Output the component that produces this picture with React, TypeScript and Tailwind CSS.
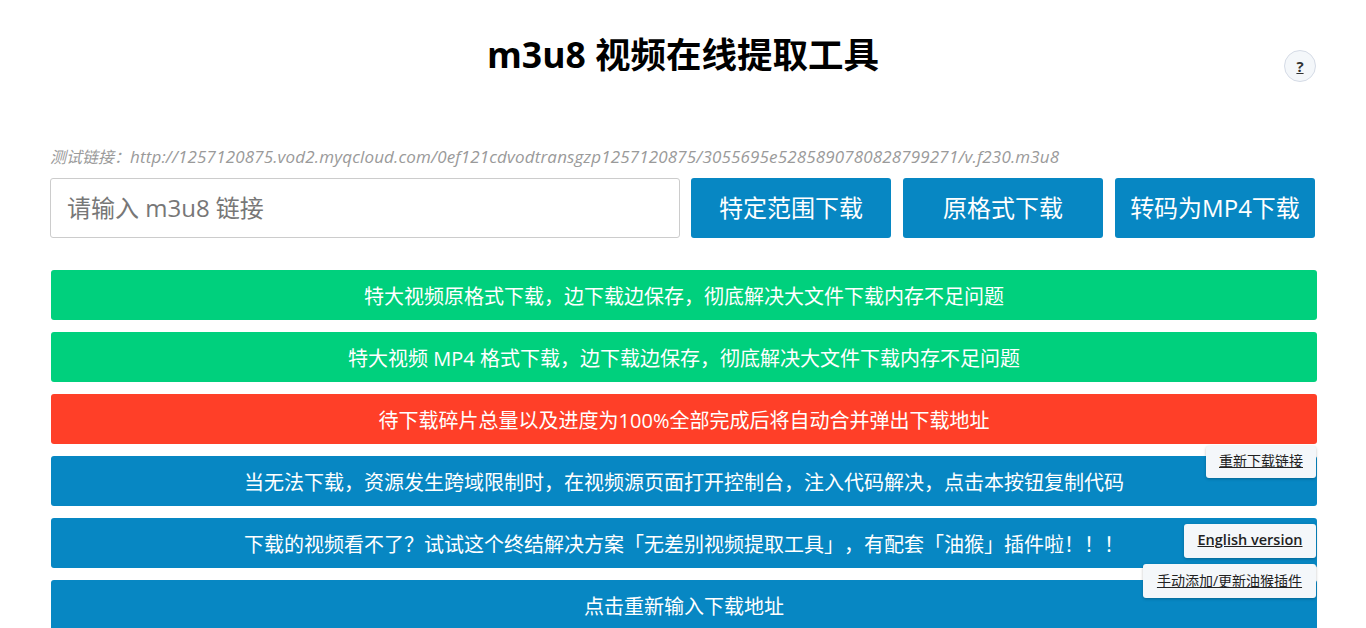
const font = { fontFamily: '"Open Sans", "Noto Sans CJK SC", sans-serif' }

const bars = [
  { text: '特大视频原格式下载，边下载边保存，彻底解决大文件下载内存不足问题', color: 'bg-[#00d07d]' },
  { text: '特大视频 MP4 格式下载，边下载边保存，彻底解决大文件下载内存不足问题', color: 'bg-[#00d07d]' },
  { text: '待下载碎片总量以及进度为100%全部完成后将自动合并弹出下载地址', color: 'bg-[#ff3f28]' },
  { text: '当无法下载，资源发生跨域限制时，在视频源页面打开控制台，注入代码解决，点击本按钮复制代码', color: 'bg-[#0787c3]' },
  { text: '下载的视频看不了？试试这个终结解决方案「无差别视频提取工具」，有配套「油猴」插件啦！！！', color: 'bg-[#0787c3]' },
  { text: '点击重新输入下载地址', color: 'bg-[#0787c3]' },
]

const actions = ['特定范围下载', '原格式下载', '转码为MP4下载']

function FloatButton({ label, className }: { label: string; className: string }) {
  return (
    <button
      className={`absolute right-[50px] flex items-center justify-center rounded-[3px] bg-[#f4f7fa] text-[#222] underline shadow-[0_1px_3px_rgba(0,0,0,0.25)] ${className}`}
    >
      {label}
    </button>
  )
}

export default function App() {
  return (
    <div className="relative h-[628px] overflow-hidden bg-white [text-spacing-trim:space-all]" style={font}>
      <h1 className="pt-[32px] pb-px text-center text-[35.5px] leading-[44px] font-bold text-black">m3u8 视频在线提取工具</h1>

      <div className="mt-[70px] pl-[50px] pr-[49px]">
        <p className="text-[16px] leading-[20px] text-[#9a9a9a] italic">
          测试链接：<span className="text-[17px] tracking-[0.15px]">http://1257120875.vod2.myqcloud.com/0ef121cdvodtransgzp1257120875/3055695e5285890780828799271/v.f230.m3u8</span>
        </p>

        <div className="mt-[11px] flex h-[60px] gap-3">
          <input
            placeholder="请输入 m3u8 链接"
            className="mr-[-1px] h-full w-[630px] rounded-[3px] border border-[#ccc] px-4 pb-0.5 text-[24px] text-[#333] outline-none placeholder:text-[#777]"
          />
          {actions.map((label) => (
            <button key={label} className="h-full w-[200px] rounded-[3px] bg-[#0787c3] text-[24px] text-white">
              {label}
            </button>
          ))}
        </div>

        <div className="mt-8 ml-px flex flex-col gap-3">
          {bars.map((bar) => (
            <button key={bar.text} className={`h-[50px] w-full shrink-0 rounded-[3px] pt-1 text-[20px] text-white ${bar.color}`}>
              {bar.text}
            </button>
          ))}
        </div>
      </div>

      <button className="absolute top-[50px] right-[50px] flex h-8 w-8 items-center justify-center rounded-full border border-[#d5dbe6] bg-[#f4f7fa] text-[15px] font-bold text-[#333] underline">
        ?
      </button>
      <FloatButton label="重新下载链接" className="top-[446px] h-8 w-[110px] pb-1 text-[14px]" />
      <FloatButton label="English version" className="top-[524px] h-[34px] w-[132px] pb-0.5 text-[14.5px] font-semibold" />
      <FloatButton label="手动添加/更新油猴插件" className="top-[564px] h-[34px] w-[173px] pb-0.5 text-[14px]" />
    </div>
  )
}
